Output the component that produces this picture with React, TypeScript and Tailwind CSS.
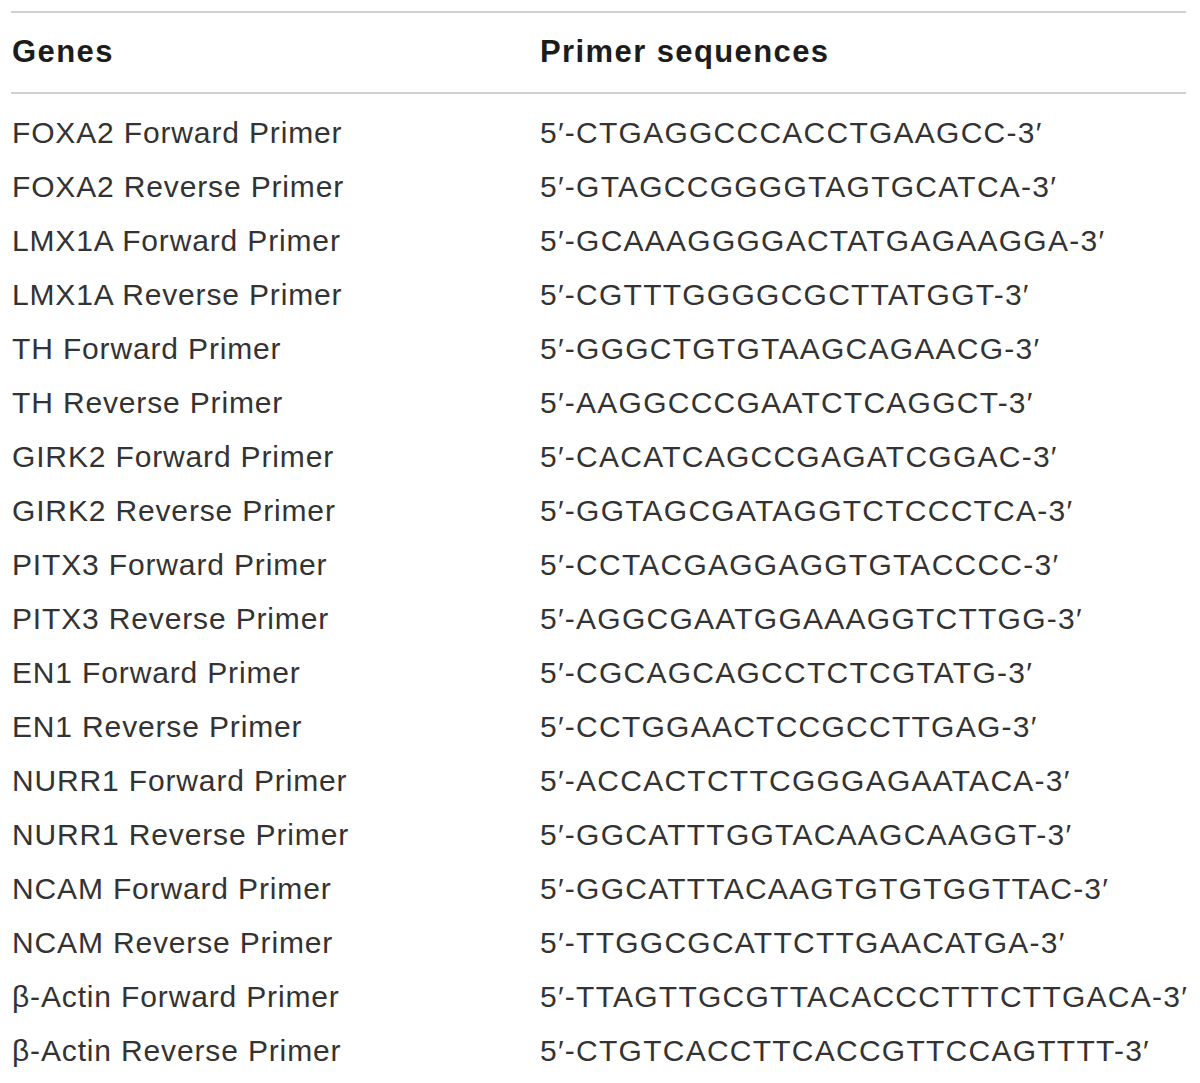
const rows: [string, string][] = [
  ["FOXA2 Forward Primer", "CTGAGGCCCACCTGAAGCC"],
  ["FOXA2 Reverse Primer", "GTAGCCGGGGTAGTGCATCA"],
  ["LMX1A Forward Primer", "GCAAAGGGGACTATGAGAAGGA"],
  ["LMX1A Reverse Primer", "CGTTTGGGGCGCTTATGGT"],
  ["TH Forward Primer", "GGGCTGTGTAAGCAGAACG"],
  ["TH Reverse Primer", "AAGGCCCGAATCTCAGGCT"],
  ["GIRK2 Forward Primer", "CACATCAGCCGAGATCGGAC"],
  ["GIRK2 Reverse Primer", "GGTAGCGATAGGTCTCCCTCA"],
  ["PITX3 Forward Primer", "CCTACGAGGAGGTGTACCCC"],
  ["PITX3 Reverse Primer", "AGGCGAATGGAAAGGTCTTGG"],
  ["EN1 Forward Primer", "CGCAGCAGCCTCTCGTATG"],
  ["EN1 Reverse Primer", "CCTGGAACTCCGCCTTGAG"],
  ["NURR1 Forward Primer", "ACCACTCTTCGGGAGAATACA"],
  ["NURR1 Reverse Primer", "GGCATTTGGTACAAGCAAGGT"],
  ["NCAM Forward Primer", "GGCATTTACAAGTGTGTGGTTAC"],
  ["NCAM Reverse Primer", "TTGGCGCATTCTTGAACATGA"],
  ["β-Actin Forward Primer", "TTAGTTGCGTTACACCCTTTCTTGACA"],
  ["β-Actin Reverse Primer", "CTGTCACCTTCACCGTTCCAGTTTT"],
];

export default function App() {
  return (
    <div className="bg-white w-[1200px] h-[1083px] pt-[11px] pl-[11px] pr-[14px] font-['Liberation_Sans',Arial,sans-serif]">
      {/* header */}
      <div className="flex items-center h-[83px] border-t-2 border-b-2 border-[#d0d0d0] font-bold text-[31px] tracking-[1.4px] text-[#1c1c1c]">
        <div className="w-[529px] shrink-0 pl-[1px]">Genes</div>
        <div>Primer sequences</div>
      </div>

      {/* body */}
      <div className="pt-[11px] text-[30px] text-[#333333]">
        {rows.map(([gene, seq]) => (
          <div key={gene} className="flex items-center h-[54px] whitespace-nowrap">
            <div className="w-[529px] shrink-0 pl-[1px] tracking-[0.85px]">{gene}</div>
            <div className="tracking-[1.25px]">5′-{seq}-3′</div>
          </div>
        ))}
      </div>
    </div>
  );
}
